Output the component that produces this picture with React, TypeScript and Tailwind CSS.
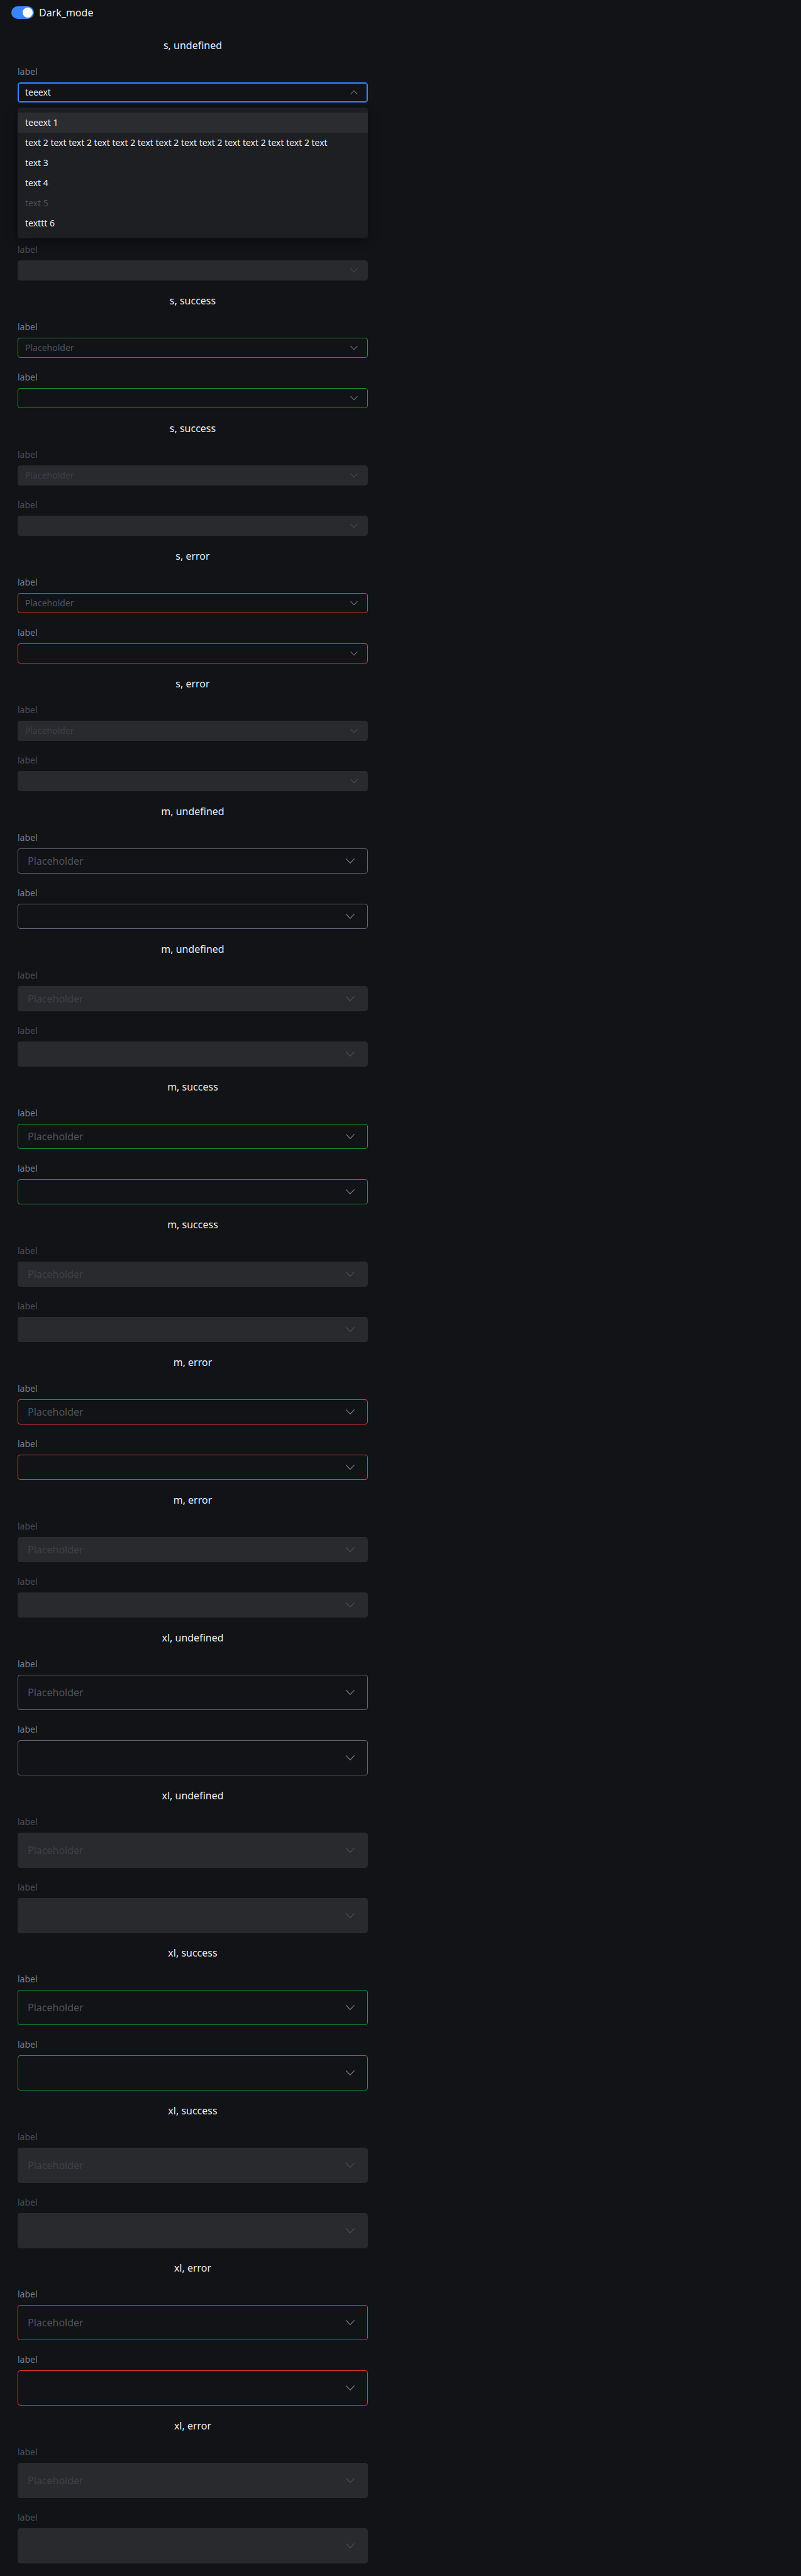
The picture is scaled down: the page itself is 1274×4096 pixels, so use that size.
import { useState } from "react";

type Size = "s" | "m" | "xl";
type Status = "undefined" | "success" | "error";

const SIZES: Size[] = ["s", "m", "xl"];
const STATUSES: Status[] = ["undefined", "success", "error"];

const OPTIONS = [
  { text: "teeext 1", disabled: false },
  {
    text: "text 2 text text 2 text text 2 text text 2 text text 2 text text 2 text text 2 text",
    disabled: false,
  },
  { text: "text 3", disabled: false },
  { text: "text 4", disabled: false },
  { text: "text 5", disabled: true },
  { text: "texttt 6", disabled: false },
];

const boxSize: Record<Size, string> = {
  s: "h-8 px-[11px] text-sm",
  m: "h-10 px-[15px] text-base",
  xl: "h-14 px-[15px] text-base",
};

const borderColor: Record<Status, string> = {
  undefined: "border-[#62656f]",
  success: "border-[#169a3a]",
  error: "border-[#ea362f]",
};

function Chevron({ size, up }: { size: Size; up: boolean }) {
  return (
    <svg
      viewBox="0 0 24 24"
      fill="none"
      stroke="currentColor"
      strokeWidth="1.3"
      className={size === "s" ? "size-5 shrink-0" : "size-6 shrink-0"}
      aria-hidden="true"
    >
      <path d={up ? "M5.4 15.6 12 8.6l6.6 7" : "M5.4 8.4 12 15.4l6.6-7"} />
    </svg>
  );
}

function Menu({ id }: { id: string }) {
  return (
    <ul
      id={id}
      role="listbox"
      className="absolute inset-x-0 top-full z-10 mt-2 rounded-[4px] bg-[#1e1f23] py-2 text-sm text-[#ebecef] shadow-[0_4px_16px_rgba(0,0,0,0.4)]"
    >
      {OPTIONS.map((option, i) => (
        <li
          key={option.text}
          role="option"
          aria-selected={i === 0}
          aria-disabled={option.disabled}
          className={`h-8 truncate px-3 leading-8 ${i === 0 ? "bg-[#2b2c30]" : ""} ${
            option.disabled ? "text-[#4b4e57]" : ""
          }`}
        >
          {option.text}
        </li>
      ))}
    </ul>
  );
}

interface FieldProps {
  id: string;
  size: Size;
  status: Status;
  disabled: boolean;
  placeholder?: string;
  initialValue?: string;
  open?: boolean;
}

function Field({ id, size, status, disabled, placeholder, initialValue = "", open = false }: FieldProps) {
  const [value, setValue] = useState(initialValue);
  const frame = disabled
    ? "border border-[#292a2e] bg-[#292a2e] text-[#4b4e57]"
    : open
      ? "border border-[#3a85ff] ring-1 ring-inset ring-[#3a85ff] text-[#7b7e8b]"
      : `border ${borderColor[status]} text-[#7b7e8b]`;

  return (
    <div className="flex flex-col gap-[7px]">
      <label htmlFor={id} className={`text-sm leading-5 ${disabled ? "text-[#4b4e57]" : "text-[#7b7e8b]"}`}>
        label
      </label>
      <div className="relative">
        <div className={`flex items-center rounded-[4px] ${boxSize[size]} ${frame}`}>
          <input
            id={id}
            type="text"
            role="combobox"
            aria-expanded={open}
            aria-controls={open ? `${id}-menu` : undefined}
            autoComplete="off"
            disabled={disabled}
            placeholder={placeholder}
            value={value}
            onChange={(e) => setValue(e.target.value)}
            className={`w-full min-w-0 flex-1 bg-transparent text-[#ebecef] outline-none ${
              disabled ? "placeholder:text-[#3d4047]" : "placeholder:text-[#50535c]"
            }`}
          />
          <Chevron size={size} up={open} />
        </div>
        {open && <Menu id={`${id}-menu`} />}
      </div>
    </div>
  );
}

function Group({ size, status, disabled }: { size: Size; status: Status; disabled: boolean }) {
  const id = `${size}-${status}-${disabled ? "off" : "on"}`;
  const open = size === "s" && status === "undefined" && !disabled;
  return (
    <section className={size === "xl" && disabled ? "pb-[19px]" : "pb-5"}>
      <h2 className="mb-5 text-center text-base leading-6 font-[450] text-[#ebecef]">
        {`${size}, ${status}`}
      </h2>
      <div className="flex flex-col gap-[21px]">
        <Field
          id={`${id}-1`}
          size={size}
          status={status}
          disabled={disabled}
          placeholder="Placeholder"
          initialValue={open ? "teeext" : ""}
          open={open}
        />
        <Field id={`${id}-2`} size={size} status={status} disabled={disabled} />
      </div>
    </section>
  );
}

export default function App() {
  const [dark, setDark] = useState(true);
  return (
    <div className="min-h-screen bg-[#121317] font-['Noto_Sans',sans-serif] font-[450]">
      <header className="flex px-[18px] pt-[10px] pb-[30px]">
        <label className="flex items-center gap-2 text-base leading-5 text-[#ebecef]">
          <input
            type="checkbox"
            role="switch"
            checked={dark}
            onChange={(e) => setDark(e.target.checked)}
            className="h-5 w-9 appearance-none rounded-full bg-[#5f626d] p-0.5 before:block before:size-4 before:rounded-full before:bg-white checked:bg-[#3a85ff] checked:before:ml-4"
          />
          Dark_mode
        </label>
      </header>
      <main className="ml-7 max-w-[557px]">
        {SIZES.map((size) =>
          STATUSES.map((status) =>
            [false, true].map((disabled) => (
              <Group key={`${size}-${status}-${disabled}`} size={size} status={status} disabled={disabled} />
            )),
          ),
        )}
      </main>
    </div>
  );
}
